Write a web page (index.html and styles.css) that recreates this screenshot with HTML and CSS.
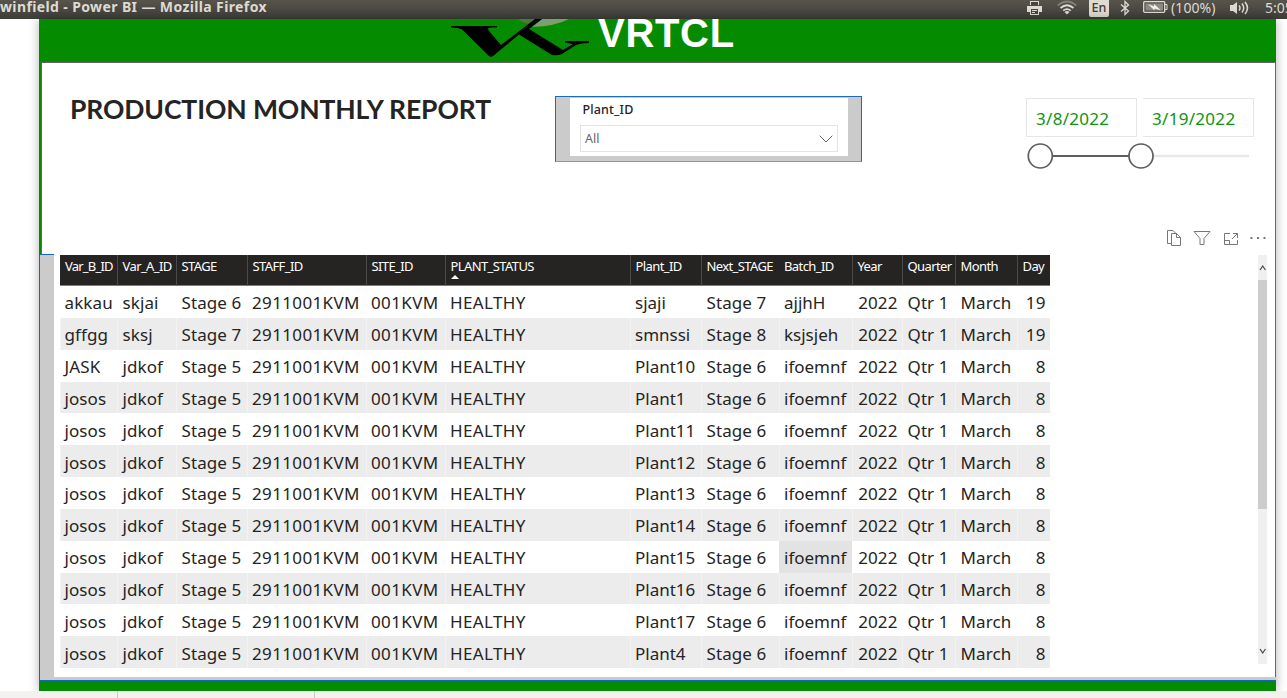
FILE: index.html
```html
<!DOCTYPE html>
<html lang="en">
<head>
<meta charset="utf-8">
<title>winfield - Power BI</title>
<link rel="stylesheet" href="styles.css">
</head>
<body>
<header class="topbar">
  <span class="window-title">winfield - Power BI — Mozilla Firefox</span>
  <div class="tray">
    <svg class="printer" width="18" height="16" viewBox="0 0 18 16"><path d="M4 5V1h9v4M1 6h15v6h-3v2H4v-2H1z" fill="#dfdbd2"/><path d="M5 2h7v3H5zM5 9h7v5H5z" fill="#47453f"/><path d="M6 10.500h5M6 12.500h3" stroke="#dfdbd2"/><path d="M4 14.500h9M12.500 8v6M4.500 8v6" stroke="#dfdbd2"/></svg>
    <svg class="wifi" width="20" height="16" viewBox="0 0 20 16" fill="none" stroke="#dfdbd2" stroke-width="1.700"><path d="M.700 5.500Q10-2.500 19.300 5.500" stroke="#85827b"/><path d="M3.500 8Q10 2.500 16.500 8M6.200 10.600Q10 7.600 13.800 10.600"/><path d="M7.500 12Q10 10 12.500 12L10 14.500z" fill="#dfdbd2" stroke="none"/></svg>
    <span class="lang">En</span>
    <svg class="bluetooth" width="10" height="16" viewBox="0 0 10 16" fill="none" stroke="#dfdbd2" stroke-width="1.300"><path d="M1 4.500l7.500 6.500L5 14.500v-13L8.500 5 1 11.500"/></svg>
    <svg class="battery" width="25" height="14" viewBox="0 0 25 14"><rect x=".7" y="1.700" width="21" height="10.600" rx="1" fill="none" stroke="#dfdbd2" stroke-width="1.300"/><path d="M22 4.500h2v5h-2" fill="none" stroke="#dfdbd2"/><path d="M2.500 3.500h17.500v7H2.500z" fill="#8d8a83"/><path d="M5 4l6 2.500V4l7 6.500-6.500-2v2z" fill="#f3f0e8"/></svg>
    <span class="percent">(100%)</span>
    <svg class="volume" width="21" height="16" viewBox="0 0 21 16" fill="none" stroke="#dfdbd2" stroke-width="1.500"><path d="M1 5h3l4-3v12l-4-3H1z" fill="#dfdbd2" stroke="none"/><path d="M10 5.500q2 2.500 0 5M13 3.500q3.500 4.500 0 9M16 2q5 6 0 12"/></svg>
    <span class="clock">5:05</span>
  </div>
</header>
<main class="workspace">
  <section class="canvas">
    <div class="banner">
      <svg class="logo" width="142" height="43" viewBox="0 0 142 43"><path d="M67 0h20L79 5Q71 4 67 0z" fill="#4c7a35"/><path d="M91 0h27Q105 7 81 8z" fill="#7c9f70"/><path d="M0 7h46v1.500q-12-1-8 3.500L50 26 84 0h7L78 10l34 21 10-6-8-1.500V22h24v2q-8 0-13 2l-14 9q-5 2-10 1L68 15.500 42 37q-2 1.500-4 0L11 10.500Q7 8.500 0 8.500z" fill="#000"/></svg>
      <span class="brand">VRTCL</span>
    </div>
    <div class="filters">
      <h1 class="title">PRODUCTION MONTHLY REPORT</h1>
      <div class="plant-slicer">
        <div class="slicer-body">
          <div class="slicer-label">Plant_ID</div>
          <div class="dropdown"><span>All</span><svg width="14" height="8" viewBox="0 0 14 8"><path d="M.700.700L7 7 13.300.700" fill="none" stroke="#666"/></svg></div>
        </div>
      </div>
      <div class="date-slicer">
        <div class="dates"><span class="date">3/8/2022</span><span class="date end">3/19/2022</span></div>
        <svg class="slider" width="226" height="28" viewBox="0 0 226 28"><path d="M114 14h109" stroke="#e8e8e8" stroke-width="2.500"/><path d="M14 14h101" stroke="#605e5c" stroke-width="2"/><g fill="#fff" stroke="#605e5c" stroke-width="1.700"><circle cx="14.300" cy="14" r="12"/><circle cx="115" cy="14" r="12"/></g></svg>
      </div>
      <div class="actions">
        <svg width="16" height="18" viewBox="0 0 16 18"><path d="M5 14.500H1.500v-13H7L10 4.500M5.500 4.500h5l4 4v8h-9zM10.500 4.500v4h4"/></svg>
        <svg width="18" height="18" viewBox="0 0 18 18"><path d="M1 2.500h16L11 9.500v6H7v-6z"/></svg>
        <svg width="16" height="16" viewBox="0 0 16 16"><path d="M7 3.500H1.500v11h13V10M1.500 10.500h5v4M9 9l5-5M10 3.500h4.500V8"/></svg>
        <svg width="16" height="4" viewBox="0 0 16 4"><path class="dots" d="M.5 1h2v2h-2zM7 1h2v2H7zM13.500 1h2v2h-2z"/></svg>
      </div>
    </div>
    <div class="table-visual">
      <div class="visual-body">
        <table class="report">
          <colgroup><col class="w57"><col class="w59"><col class="w71"><col class="w119"><col class="w79"><col class="w185"><col class="w71"><col class="w78"><col class="w73"><col class="w50"><col class="w53"><col class="w62"><col class="w33"></colgroup>
          <thead><tr><th>Var_B_ID</th><th>Var_A_ID</th><th>STAGE</th><th>STAFF_ID</th><th>SITE_ID</th><th class="sorted">PLANT_STATUS</th><th>Plant_ID</th><th>Next_STAGE</th><th class="plain">Batch_ID</th><th>Year</th><th>Quarter</th><th>Month</th><th>Day</th></tr></thead>
          <tbody>
            <tr><td>akkau</td><td>skjai</td><td>Stage 6</td><td>2911001KVM</td><td>001KVM</td><td>HEALTHY</td><td>sjaji</td><td>Stage 7</td><td>ajjhH</td><td>2022</td><td>Qtr 1</td><td>March</td><td>19</td></tr>
            <tr><td>gffgg</td><td>sksj</td><td>Stage 7</td><td>2911001KVM</td><td>001KVM</td><td>HEALTHY</td><td>smnssi</td><td>Stage 8</td><td>ksjsjeh</td><td>2022</td><td>Qtr 1</td><td>March</td><td>19</td></tr>
            <tr><td>JASK</td><td>jdkof</td><td>Stage 5</td><td>2911001KVM</td><td>001KVM</td><td>HEALTHY</td><td>Plant10</td><td>Stage 6</td><td>ifoemnf</td><td>2022</td><td>Qtr 1</td><td>March</td><td>8</td></tr>
            <tr><td>josos</td><td>jdkof</td><td>Stage 5</td><td>2911001KVM</td><td>001KVM</td><td>HEALTHY</td><td>Plant1</td><td>Stage 6</td><td>ifoemnf</td><td>2022</td><td>Qtr 1</td><td>March</td><td>8</td></tr>
            <tr><td>josos</td><td>jdkof</td><td>Stage 5</td><td>2911001KVM</td><td>001KVM</td><td>HEALTHY</td><td>Plant11</td><td>Stage 6</td><td>ifoemnf</td><td>2022</td><td>Qtr 1</td><td>March</td><td>8</td></tr>
            <tr><td>josos</td><td>jdkof</td><td>Stage 5</td><td>2911001KVM</td><td>001KVM</td><td>HEALTHY</td><td>Plant12</td><td>Stage 6</td><td>ifoemnf</td><td>2022</td><td>Qtr 1</td><td>March</td><td>8</td></tr>
            <tr><td>josos</td><td>jdkof</td><td>Stage 5</td><td>2911001KVM</td><td>001KVM</td><td>HEALTHY</td><td>Plant13</td><td>Stage 6</td><td>ifoemnf</td><td>2022</td><td>Qtr 1</td><td>March</td><td>8</td></tr>
            <tr><td>josos</td><td>jdkof</td><td>Stage 5</td><td>2911001KVM</td><td>001KVM</td><td>HEALTHY</td><td>Plant14</td><td>Stage 6</td><td>ifoemnf</td><td>2022</td><td>Qtr 1</td><td>March</td><td>8</td></tr>
            <tr><td>josos</td><td>jdkof</td><td>Stage 5</td><td>2911001KVM</td><td>001KVM</td><td>HEALTHY</td><td>Plant15</td><td>Stage 6</td><td class="hovered">ifoemnf</td><td>2022</td><td>Qtr 1</td><td>March</td><td>8</td></tr>
            <tr><td>josos</td><td>jdkof</td><td>Stage 5</td><td>2911001KVM</td><td>001KVM</td><td>HEALTHY</td><td>Plant16</td><td>Stage 6</td><td>ifoemnf</td><td>2022</td><td>Qtr 1</td><td>March</td><td>8</td></tr>
            <tr><td>josos</td><td>jdkof</td><td>Stage 5</td><td>2911001KVM</td><td>001KVM</td><td>HEALTHY</td><td>Plant17</td><td>Stage 6</td><td>ifoemnf</td><td>2022</td><td>Qtr 1</td><td>March</td><td>8</td></tr>
            <tr><td>josos</td><td>jdkof</td><td>Stage 5</td><td>2911001KVM</td><td>001KVM</td><td>HEALTHY</td><td>Plant4</td><td>Stage 6</td><td>ifoemnf</td><td>2022</td><td>Qtr 1</td><td>March</td><td>8</td></tr>
          </tbody>
        </table>
        <div class="scrollbar">
          <svg width="9" height="25" viewBox="0 0 9 25"><path d="M2 15l2.700-4 2.700 4"/></svg>
          <div class="thumb"></div>
          <svg width="9" height="25" viewBox="0 0 9 25"><path d="M2 10l2.700 4L7.400 10"/></svg>
        </div>
      </div>
    </div>
  </section>
</main>
<footer class="statusbar"><span class="tab first"></span><span class="tab"></span></footer>
</body>
</html>
```
FILE: styles.css
```css
* { box-sizing: border-box; }
body {
  margin: 0;
  width: 1287px;
  height: 698px;
  overflow: hidden;
  display: flex;
  flex-direction: column;
  background: #fff;
  color: #252423;
  font-family: "Noto Sans", sans-serif;
}
svg { display: block; flex: none; }

.topbar {
  height: 19px;
  flex: none;
  display: flex;
  justify-content: space-between;
  background: linear-gradient(#57544c, #3e3d39);
  color: #dfdbd2;
  overflow: hidden;
  white-space: nowrap;
}
.window-title { font-size: 14px; font-weight: 700; line-height: 14px; letter-spacing: .38px; }
.tray { display: flex; width: 261px; flex: none; font-size: 14px; line-height: 15px; }
.tray > * { flex: none; }
.wifi { margin-left: 13px; }
.lang {
  width: 20px;
  height: 17px;
  margin-left: 12px;
  border-radius: 0 0 2px 2px;
  background: #dfdbd2;
  color: #3e3d39;
  font-size: 12.500px;
  font-weight: 500;
  line-height: 16px;
  text-align: center;
}
.bluetooth { margin-left: 11px; }
.battery { margin-left: 13px; }
.percent { margin-left: 3px; width: 46px; letter-spacing: .1px; }
.volume { margin-left: 12px; }
.clock { margin-left: 15px; }

.workspace { height: 672px; flex: none; padding-left: 39px; }
.canvas {
  width: 1237px;
  height: 672px;
  background: #058b00;
  box-shadow: 0 0 10px rgba(0, 0, 0, .3);
}
.banner { height: 43px; display: flex; padding-left: 412px; overflow: hidden; }
.brand {
  margin-left: 5px;
  color: #fff;
  font: 700 40px/28px "Liberation Sans", sans-serif;
  letter-spacing: .7px;
}
.filters {
  position: relative;
  height: 192px;
  margin: 0 0 0 2px;
  border: solid #666;
  border-width: 1px 1px 0;
  background: #fff;
  display: flex;
}
.title {
  margin: 27px 0 0 28px;
  width: 485px;
  font: 700 26.500px/38px Lato, sans-serif;
  letter-spacing: -.1px;
  white-space: nowrap;
}
.plant-slicer {
  width: 307px;
  height: 66px;
  margin-top: 33px;
  padding: 1px 13px 0 14px;
  border: 1px solid #1a6bb8;
  border-bottom-color: #6ca0d0;
  background: #cbcbcb;
}
.slicer-body { height: 58px; padding: 3px 10px; background: #fff; }
.slicer-label { padding-left: 2.500px; font-size: 12.500px; font-weight: 500; line-height: 17px; letter-spacing: .15px; }
.dropdown {
  height: 27px;
  margin-top: 7px;
  padding: 0 4px;
  border: 1px solid #e4e4e4;
  display: flex;
  align-items: center;
  justify-content: space-between;
  color: #666;
  font-size: 12.500px;
}
.date-slicer { margin: 35px 0 0 164px; }
.dates { display: flex; gap: 6px; }
.date {
  width: 111px;
  height: 39px;
  padding-left: 9px;
  border: 1px solid #e6e6e6;
  color: #109310;
  font-size: 17px;
  line-height: 40px;
  letter-spacing: .3px;
}
.end { border-left: 0; }
.slider { margin-top: 5px; }
.actions {
  position: absolute;
  right: 9px;
  bottom: 7px;
  display: flex;
  align-items: center;
  gap: 11.500px;
}
.actions path { fill: none; stroke: #777; }
.actions .dots { fill: #777; stroke: none; }

.table-visual {
  height: 427px;
  padding-bottom: 3px;
  padding-left: 14px;
  background: #cbcbcb;
  border: solid #1368b8;
  border-width: 1px 0 1px 1px;
}
.visual-body {
  height: 423px;
  margin-top: -1px;
  padding-left: 6px;
  padding-right: 8px;
  border-right: 1px solid #666;
  background: #fff;
  display: flex;
  justify-content: space-between;
}
.report {
  width: 990px;
  margin-top: 1px;
  flex: none;
  align-self: flex-start;
  table-layout: fixed;
  border-collapse: separate;
  border-spacing: 0;
}
.report th {
  height: 31px;
  padding: 3px 0 0;
  border-left: 1px solid #4b4a49;
  border-bottom: 1px solid #4a8cc4;
  background: #252423;
  color: #fff;
  font-size: 13px;
  font-weight: 400;
  line-height: 17px;
  letter-spacing: -.6px;
  text-align: left;
  vertical-align: top;
  white-space: nowrap;
}
.report th, .report td { padding-left: 4.500px; }
.report th:first-child { letter-spacing: -.8px; }
.report th:first-child, .report .plain { border-left: 0; padding-left: 5px; }
.report td:first-child { padding-left: 3.500px; }
.sorted::after {
  content: "";
  display: block;
  width: 0;
  border: solid transparent;
  border-width: 0 4px 4px;
  border-bottom-color: #fff;
}
.report td {
  height: 31.850px;
  padding-top: 3px;
  padding-bottom: 0;
  padding-right: 0;
  border-left: 1px solid transparent;
  font-size: 17px;
  line-height: 22px;
  letter-spacing: .1px;
  white-space: nowrap;
}
.report td:nth-child(4), .report td:nth-child(5), .report td:nth-child(6) { padding-left: 4px; letter-spacing: .36px; }
.report td:nth-child(7), .report td:nth-child(9) { padding-left: 4px; letter-spacing: 0; }
.report tr:nth-child(even) td { background: #ececec; border-left-color: #f3f3f3; }
.report tbody td:nth-child(10), .report tbody td:last-child { text-align: right; padding-right: 4.500px; }
.report td.hovered { background: #e3e3e3; }
.w33 { width: 33px; }
.w50 { width: 50px; }
.w53 { width: 53px; }
.w57 { width: 57px; }
.w59 { width: 59px; }
.w62 { width: 62px; }
.w71 { width: 71px; }
.w73 { width: 73px; }
.w78 { width: 78px; }
.w79 { width: 79px; }
.w119 { width: 119px; }
.w185 { width: 185px; }
.scrollbar { width: 9px; height: 409px; margin-top: 1px; background: #f0f0f0; display: flex; flex-direction: column; }
.scrollbar path { fill: none; stroke: #444; stroke-width: 1.200; }
.thumb { height: 229px; margin-bottom: auto; background: #cdcdcd; }

.statusbar { height: 7px; flex: none; display: flex; background: #f3f2f1; }
.tab { width: 197px; border-right: 1px solid #c8c8c8; }
.first { width: 118px; }
```
